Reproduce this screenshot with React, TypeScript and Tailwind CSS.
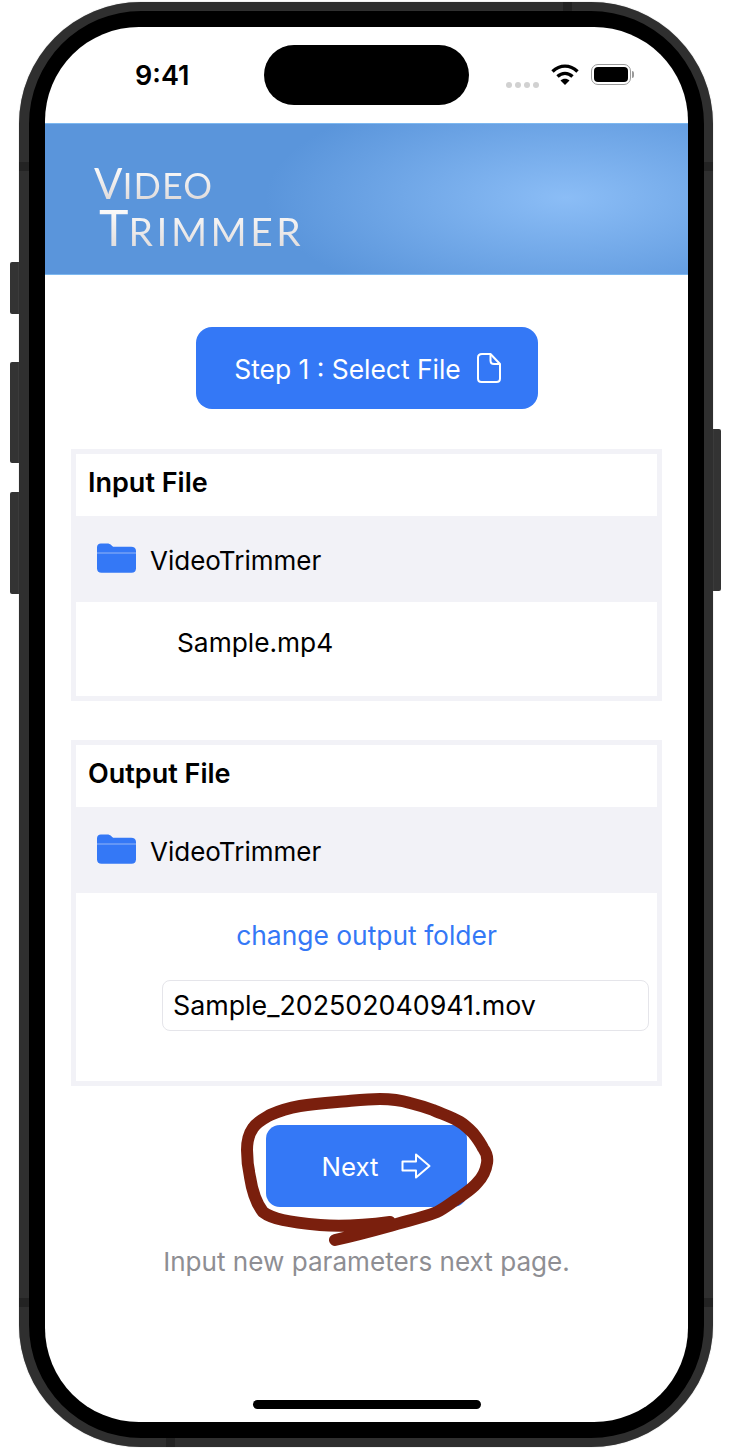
import { ReactNode } from "react";

const INTER = "font-['Inter','Liberation_Sans',sans-serif]";

function FolderIcon() {
  return (
    <svg width="39" height="30" viewBox="0 0 40 31" preserveAspectRatio="none" className="mb-[2px] shrink-0">
      <path
        d="M0 10V4.500C0 2 1.600 0.500 4 0.500h6.500c1.800 0 2.800 0.500 4 1.600L16.500 4H35c3 0 5 1.600 5 4.200V10Z"
        fill="#3478f6"
      />
      <path
        d="M0 10.600h40V26c0 3-1.800 4.800-4.600 4.800H4.600C1.800 30.800 0 29 0 26Z"
        fill="#3478f6"
      />
    </svg>
  );
}

function FileIcon() {
  return (
    <svg width="24" height="30" viewBox="0 0 24 30" fill="none" stroke="white" strokeWidth="2" strokeLinejoin="round" className="shrink-0">
      <path d="M5 1h8.500L23 11v14.500c0 2.200-1.400 3.500-3.500 3.500h-15C2.400 29 1 27.700 1 25.500V4.500C1 2.300 2.600 1 5 1Z" />
      <path d="M13.500 1v6.500c0 2.200 1.300 3.500 3.500 3.500h6" />
    </svg>
  );
}

function ArrowIcon() {
  return (
    <svg width="30" height="26" viewBox="0 0 30 26" fill="none" stroke="white" strokeWidth="2" strokeLinejoin="round" className="shrink-0">
      <path d="M1.500 8.500h13.500V1.500L28.500 13 15 24.500v-7H1.500Z" />
    </svg>
  );
}

function Card({ title, children }: { title: string; children: ReactNode }) {
  return (
    <section className="border-[5px] border-[#f2f2f7] bg-white">
      <div className="flex h-[62px] items-center px-[12px] pb-[4px] text-[27px] font-semibold text-black">
        {title}
      </div>
      <div className="flex h-[86px] items-center gap-[14px] bg-[#f2f2f7] pl-[21px] text-[26px] text-black">
        <FolderIcon />
        <span className="pt-[2px]">VideoTrimmer</span>
      </div>
      {children}
    </section>
  );
}

function StatusBar() {
  return (
    <div className="flex h-[96px] items-start pt-[18px]">
      <span className="ml-[90px] mt-[13px] w-[100px] text-[27px] leading-[36px] font-semibold text-black">
        9:41
      </span>
      <div className="ml-[29px] h-[60px] w-[205px] rounded-full bg-black" />
      <div className="ml-[37px] mt-[37px] flex gap-[3px]">
        <span className="h-[6px] w-[6px] rounded-full bg-[#d1d1d1]" />
        <span className="h-[6px] w-[6px] rounded-full bg-[#d1d1d1]" />
        <span className="h-[6px] w-[6px] rounded-full bg-[#d1d1d1]" />
        <span className="h-[6px] w-[6px] rounded-full bg-[#d1d1d1]" />
      </div>
      <svg width="28" height="21" viewBox="0 0 28 21" fill="none" stroke="black" strokeWidth="3.400" className="ml-[12px] mt-[19px] shrink-0">
        <path d="M1.500 7.500C9 0.300 19 0.300 26.500 7.500" />
        <path d="M6.500 12.500C11 8.300 17 8.300 21.500 12.500" />
        <path d="M14 21L9.500 16.500C12 14.300 16 14.300 18.500 16.500Z" fill="black" stroke="none" />
      </svg>
      <div className="ml-[12px] mt-[19px] flex items-center">
        <div className="h-[21px] w-[40px] rounded-[7px] border-[1.500px] border-[#9a9a9a] p-[2px]">
          <div className="h-full w-full rounded-[4px] bg-black" />
        </div>
        <div className="ml-[1px] h-[7px] w-[2px] rounded-r-full bg-[#9a9a9a]" />
      </div>
    </div>
  );
}

function Banner() {
  return (
    <header className="h-[152px] border-y border-[#7db8f0] bg-[#5a95db] bg-[radial-gradient(ellipse_300px_115px_at_521px_74px,#8bbdf6,#5a95db)] pl-[49px] pt-[39px]">
      <div className="font-['Lato','Liberation_Sans',sans-serif] font-normal uppercase">
        <div className="h-[40px] w-fit bg-linear-to-b from-white to-[#dcd8d8] bg-clip-text text-[42px] leading-[40px] text-transparent">
          V<span className="text-[36px] tracking-[1px]">ideo</span>
        </div>
        <div className="ml-[5px] w-fit bg-linear-to-b from-white to-[#dcd8d8] bg-clip-text text-[50px] leading-[48px] text-transparent">
          T<span className="text-[39px] tracking-[3.500px]">rimmer</span>
        </div>
      </div>
    </header>
  );
}

export default function App() {
  return (
    <div className={`relative h-[1452px] w-[732px] overflow-hidden bg-white ${INTER}`}>
      {/* side buttons */}
      <div className="absolute left-[10px] top-[262px] h-[52px] w-[10px] rounded-l-[2px] bg-[#333333]" />
      <div className="absolute left-[10px] top-[362px] h-[101px] w-[10px] rounded-l-[2px] bg-[#333333]" />
      <div className="absolute left-[10px] top-[492px] h-[102px] w-[10px] rounded-l-[2px] bg-[#333333]" />
      <div className="absolute left-[712px] top-[429px] h-[162px] w-[9px] rounded-r-[2px] bg-[#333333]" />

      <div className="relative ml-[19px] mt-[2px] h-[1445px] w-[694px] rounded-[122px] border-[9px] border-l-[10px] border-[#2f2f2f] bg-black p-[16px] shadow-[0_0_1px_#888888]">
        <div className="relative h-full w-full overflow-hidden rounded-[94px] bg-white">
          <StatusBar />
          <Banner />

          <main className="flex flex-col items-center pt-[52px]">
            <button className="flex h-[82px] w-[342px] items-center justify-center gap-[16px] rounded-[16px] bg-[#3478f6] pl-[2px] text-[26.400px] text-white">
              <span className="pt-[3px]">Step 1 : Select File</span>
              <FileIcon />
            </button>

            <div className="mt-[40px] flex w-[591px] flex-col gap-[39px]">
              <Card title="Input File">
                <div className="h-[94px] pl-[101px] pt-[23px] text-[26.300px] leading-[36px] text-black">
                  Sample.mp4
                </div>
              </Card>
              <Card title="Output File">
                <div className="h-[188px] pt-[24px]">
                  <div className="text-center text-[26.400px] leading-[36px] text-[#3478f6]">
                    change output folder
                  </div>
                  <div className="ml-[86px] mt-[27px] flex h-[51px] w-[487px] items-center rounded-[8px] border border-[#e5e5ea] pl-[10px] text-[26.800px] text-black">
                    Sample_202502040941.mov
                  </div>
                </div>
              </Card>
            </div>

            <button className="mt-[39px] flex h-[82px] w-[201px] items-center justify-center gap-[23px] rounded-[14px] bg-[#3478f6] pl-[20px] text-[25.800px] text-white">
              <span className="pt-[2px]">Next</span>
              <ArrowIcon />
            </button>
            <p className="mt-[37px] text-[26.100px] leading-[36px] text-[#8e8e93]">
              Input new parameters next page.
            </p>
          </main>

          <div className="absolute bottom-[13px] left-[208px] h-[9px] w-[228px] rounded-full bg-black" />
        </div>

        {/* antenna bands */}
        <div className="absolute -top-[9px] left-[534px] h-[9px] w-[9px] bg-[#232323]" />
        <div className="absolute -bottom-[9px] left-[137px] h-[9px] w-[9px] bg-[#232323]" />
        <div className="absolute -left-[10px] top-[151px] h-[9px] w-[10px] bg-[#232323]" />
        <div className="absolute -right-[9px] top-[151px] h-[9px] w-[9px] bg-[#232323]" />
        <div className="absolute -left-[10px] top-[1287px] h-[9px] w-[10px] bg-[#232323]" />
        <div className="absolute -right-[9px] top-[1287px] h-[9px] w-[9px] bg-[#232323]" />
      </div>

      {/* hand drawn annotation over the next button */}
      <svg className="pointer-events-none absolute left-0 top-0" width="732" height="1452" fill="none">
        <path
          d="M335 1240C353 1236 372 1231 390 1226C406 1221 422 1218 437 1212C445 1208 452 1202 460 1197C467 1192 473 1188 477 1183C483 1177 486 1170 487 1163C488 1157 486 1152 483 1148C480 1142 477 1138 473 1133C469 1129 465 1125 460 1122C452 1117 442 1114 433 1110C425 1107 418 1105 410 1103C400 1100 390 1099 380 1099C366 1099 351 1101 337 1102C324 1103 312 1104 300 1106C289 1108 279 1111 270 1115C263 1119 257 1122 253 1128C248 1135 247 1143 247 1150C247 1160 248 1168 250 1177C252 1190 256 1203 263 1212C272 1219 288 1222 320 1225C343 1227 367 1225 390 1222"
          stroke="#7a1f0d"
          strokeWidth="12"
          strokeLinecap="round"
          strokeLinejoin="round"
        />
      </svg>
    </div>
  );
}
